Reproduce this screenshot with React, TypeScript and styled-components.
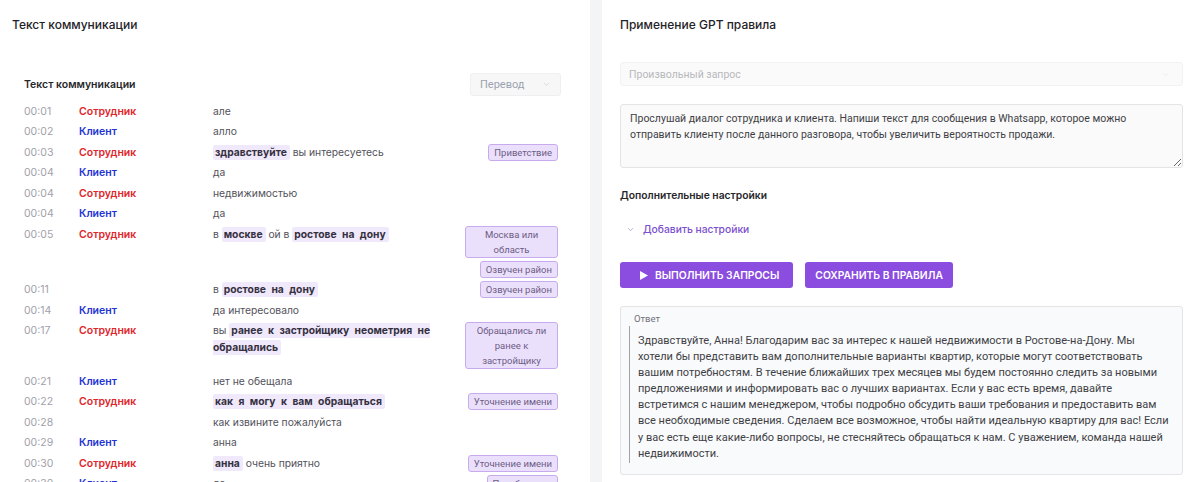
import React from 'react';
import styled, { createGlobalStyle } from 'styled-components';
import { ChevronDown } from 'lucide-react';

type Speaker = 'emp' | 'cli' | null;
type Part = string | { h: string };

interface Line {
  time: string;
  speaker: Speaker;
  parts: Part[];
  tags?: string[];
}

const LINES: Line[] = [
  { time: '00:01', speaker: 'emp', parts: ['але'] },
  { time: '00:02', speaker: 'cli', parts: ['алло'] },
  { time: '00:03', speaker: 'emp', parts: [{ h: 'здравствуйте' }, ' вы интересуетесь'], tags: ['Приветствие'] },
  { time: '00:04', speaker: 'cli', parts: ['да'] },
  { time: '00:04', speaker: 'emp', parts: ['недвижимостью'] },
  { time: '00:04', speaker: 'cli', parts: ['да'] },
  {
    time: '00:05',
    speaker: 'emp',
    parts: ['в ', { h: 'москве' }, ' ой в ', { h: 'ростове на дону' }],
    tags: ['Москва или область', 'Озвучен район'],
  },
  { time: '00:11', speaker: null, parts: ['в ', { h: 'ростове на дону' }], tags: ['Озвучен район'] },
  { time: '00:14', speaker: 'cli', parts: ['да интересовало'] },
  {
    time: '00:17',
    speaker: 'emp',
    parts: ['вы ', { h: 'ранее к застройщику неометрия не обращались' }],
    tags: ['Обращались ли ранее к застройщику'],
  },
  { time: '00:21', speaker: 'cli', parts: ['нет не обещала'] },
  { time: '00:22', speaker: 'emp', parts: [{ h: 'как я могу к вам обращаться' }], tags: ['Уточнение имени'] },
  { time: '00:28', speaker: null, parts: ['как извините пожалуйста'] },
  { time: '00:29', speaker: 'cli', parts: ['анна'] },
  { time: '00:30', speaker: 'emp', parts: [{ h: 'анна' }, ' очень приятно'], tags: ['Уточнение имени'] },
  { time: '00:30', speaker: 'cli', parts: ['да'], tags: ['Перебивание'] },
];

const PROMPT =
  'Прослушай диалог сотрудника и клиента. Напиши текст для сообщения в Whatsapp, которое можно отправить клиенту после данного разговора, чтобы увеличить вероятность продажи.';

const ANSWER_LINES = [
  'Здравствуйте, Анна! Благодарим вас за интерес к нашей недвижимости в Ростове-на-Дону. Мы',
  'хотели бы представить вам дополнительные варианты квартир, которые могут соответствовать',
  'вашим потребностям. В течение ближайших трех месяцев мы будем постоянно следить за новыми',
  'предложениями и информировать вас о лучших вариантах. Если у вас есть время, давайте',
  'встретимся с нашим менеджером, чтобы подробно обсудить ваши требования и предоставить вам',
  'все необходимые сведения. Сделаем все возможное, чтобы найти идеальную квартиру для вас! Если',
  'у вас есть еще какие-либо вопросы, не стесняйтесь обращаться к нам. С уважением, команда нашей',
  'недвижимости.',
];

const GlobalStyle = createGlobalStyle`
  html, body {
    margin: 0;
    padding: 0;
    background: #f3f4f6;
  }
  body {
    font-family: Inter, 'Noto Sans', sans-serif;
    -webkit-font-smoothing: antialiased;
  }
  * {
    box-sizing: border-box;
  }
`;

const Page = styled.div`
  display: flex;
  gap: 12px;
  width: 1190px;
  height: 482px;
  overflow: hidden;
  background: #f3f4f6;
`;

const LeftPanel = styled.section`
  flex: 0 0 590px;
  background: #fff;
  padding: 16px 32px 0 12px;
`;

const RightPanel = styled.section`
  flex: 1;
  background: #fff;
  padding: 16px 9px 0 18px;
  display: flex;
  flex-direction: column;
`;

const PanelTitle = styled.h2`
  margin: 0;
  font-size: 12px;
  line-height: 18px;
  font-weight: 500;
  color: #1f2328;
`;

const Transcript = styled.div`
  margin-top: 39px;
  padding-left: 12px;
`;

const TranscriptHeader = styled.div`
  display: flex;
  align-items: center;
  justify-content: space-between;
  margin-right: -3px;
`;

const SubTitle = styled.div`
  font-size: 10.5px;
  font-weight: 600;
  color: #27272a;
`;

const Dropdown = styled.div`
  width: 91px;
  height: 23px;
  display: flex;
  align-items: center;
  justify-content: space-between;
  padding: 0 9px;
  background: #f7f7f8;
  border: 1px solid #efeff1;
  border-radius: 3px;
  font-family: Roboto, sans-serif;
  font-size: 11px;
  color: #9ca3af;

  & svg {
    color: #c4c7cc;
  }
`;

const Rows = styled.div`
  margin-top: 5px;
`;

const Row = styled.div`
  display: grid;
  grid-template-columns: 55px 134px 1fr 93px;
  align-items: start;
  padding: 1.75px 0;
  font-size: 10.5px;
  line-height: 17px;
`;

const Time = styled.div`
  font-size: 10.5px;
  line-height: 17px;
  color: #a1a1aa;
`;

const Who = styled.div<{ $speaker: Speaker }>`
  font-size: 10.5px;
  line-height: 17px;
  font-weight: 600;
  color: ${({ $speaker }) => ($speaker === 'emp' ? '#e0262a' : '#2434d4')};
`;

const Phrase = styled.div`
  font-size: 10.3px;
  line-height: 17px;
  color: #52525b;
  padding-right: 14px;
`;

const Mark = styled.span`
  background: #f0e9fb;
  color: #35303f;
  font-weight: 700;
  word-spacing: 3px;
  padding: 1px 3px 2px 2px;
  border-radius: 2px;
`;

const Tags = styled.div`
  display: flex;
  flex-direction: column;
  align-items: flex-end;
  gap: 3px;
`;

const Tag = styled.span`
  max-width: 93px;
  padding: 0 5px;
  background: #ebe0fb;
  border: 1px solid #c8abef;
  border-radius: 3px;
  font-family: Roboto, sans-serif;
  font-size: 9.5px;
  line-height: 15px;
  color: #6b5d85;
  text-align: center;
`;

const Select = styled.div`
  margin-top: 28px;
  height: 24px;
  display: flex;
  align-items: center;
  justify-content: space-between;
  padding: 0 12px 0 8px;
  background: #fafafa;
  border: 1px solid #f2f2f3;
  border-radius: 3px;
  font-family: Roboto, sans-serif;
  font-size: 10.5px;
  color: #b8b8bc;

  & svg {
    color: #e4e4e7;
  }
`;

const Prompt = styled.textarea`
  display: block;
  margin-top: 18px;
  width: 100%;
  height: 64px;
  padding: 6px 9px;
  background: #fafafa;
  border: 1px solid #e4e4e7;
  border-radius: 3px;
  font-family: Roboto, sans-serif;
  font-size: 10.5px;
  line-height: 16px;
  color: #3f3f46;
  resize: vertical;
  outline: none;
`;

const SectionLabel = styled.div`
  margin-top: 19px;
  font-size: 10.3px;
  line-height: 16px;
  font-weight: 600;
  color: #27272a;
`;

const Expander = styled.div`
  margin-top: 18px;
  display: flex;
  align-items: center;
  gap: 8px;
  padding-left: 6px;
  font-size: 10.3px;
  line-height: 16px;
  font-weight: 500;
  color: #7b4fcf;

  & svg {
    color: #a08bc4;
  }
`;

const Actions = styled.div`
  margin-top: 25px;
  display: flex;
  gap: 12px;
`;

const Button = styled.button<{ $withIcon?: boolean }>`
  height: 26px;
  display: flex;
  align-items: center;
  gap: 7px;
  padding: ${({ $withIcon }) => ($withIcon ? '0 14px 0 20px' : '0 10px')};
  background: #8a4de0;
  border: none;
  border-radius: 3px;
  font-family: Inter, sans-serif;
  font-size: 10.3px;
  font-weight: 600;
  color: #fff;
  text-transform: uppercase;
`;

const AnswerBox = styled.div`
  margin-top: 18px;
  padding: 5px 13px 11px 8px;
  background: #f9fafb;
  border: 1px solid #e4e4e7;
  border-radius: 3px;
`;

const AnswerLabel = styled.div`
  margin-left: 5px;
  font-family: Roboto, sans-serif;
  font-size: 9.5px;
  line-height: 14px;
  color: #71717a;
`;

const Quote = styled.blockquote`
  margin: 0;
  padding: 7px 0 1px 8px;
  border-left: 1px solid #a1a1aa;
  font-family: Roboto, sans-serif;
  font-size: 11px;
  line-height: 16.1px;
  color: #3f3f46;
`;

const QuoteLine = styled.span`
  display: block;
  white-space: nowrap;
`;

const PlayIcon = () => (
  <svg width="8" height="9" viewBox="0 0 8 9">
    <path d="M0 0 L8 4.5 L0 9 Z" fill="#fff" />
  </svg>
);

const TranscriptRow = ({ line }: { line: Line }) => (
  <Row>
    <Time>{line.time}</Time>
    <Who $speaker={line.speaker}>{line.speaker === 'emp' ? 'Сотрудник' : line.speaker === 'cli' ? 'Клиент' : ''}</Who>
    <Phrase>
      {line.parts.map((part, i) => (typeof part === 'string' ? part : <Mark key={i}>{part.h}</Mark>))}
    </Phrase>
    <Tags>
      {line.tags?.map((tag, i) => (
        <Tag key={i}>{tag}</Tag>
      ))}
    </Tags>
  </Row>
);

export default function App() {
  return (
    <>
      <GlobalStyle />
      <Page>
        <LeftPanel>
          <PanelTitle>Текст коммуникации</PanelTitle>
          <Transcript>
            <TranscriptHeader>
              <SubTitle>Текст коммуникации</SubTitle>
              <Dropdown>
                Перевод
                <ChevronDown size={9} strokeWidth={1.5} />
              </Dropdown>
            </TranscriptHeader>
            <Rows>
              {LINES.map((line, i) => (
                <TranscriptRow key={i} line={line} />
              ))}
            </Rows>
          </Transcript>
        </LeftPanel>
        <RightPanel>
          <PanelTitle>Применение GPT правила</PanelTitle>
          <Select>
            Произвольный запрос
            <ChevronDown size={9} strokeWidth={1.5} />
          </Select>
          <Prompt defaultValue={PROMPT} readOnly />
          <SectionLabel>Дополнительные настройки</SectionLabel>
          <Expander>
            <ChevronDown size={9} strokeWidth={1.8} />
            Добавить настройки
          </Expander>
          <Actions>
            <Button $withIcon>
              <PlayIcon />
              Выполнить запросы
            </Button>
            <Button>Сохранить в правила</Button>
          </Actions>
          <AnswerBox>
            <AnswerLabel>Ответ</AnswerLabel>
            <Quote>
              {ANSWER_LINES.map((text, i) => (
                <QuoteLine key={i}>{text}</QuoteLine>
              ))}
            </Quote>
          </AnswerBox>
        </RightPanel>
      </Page>
    </>
  );
}
